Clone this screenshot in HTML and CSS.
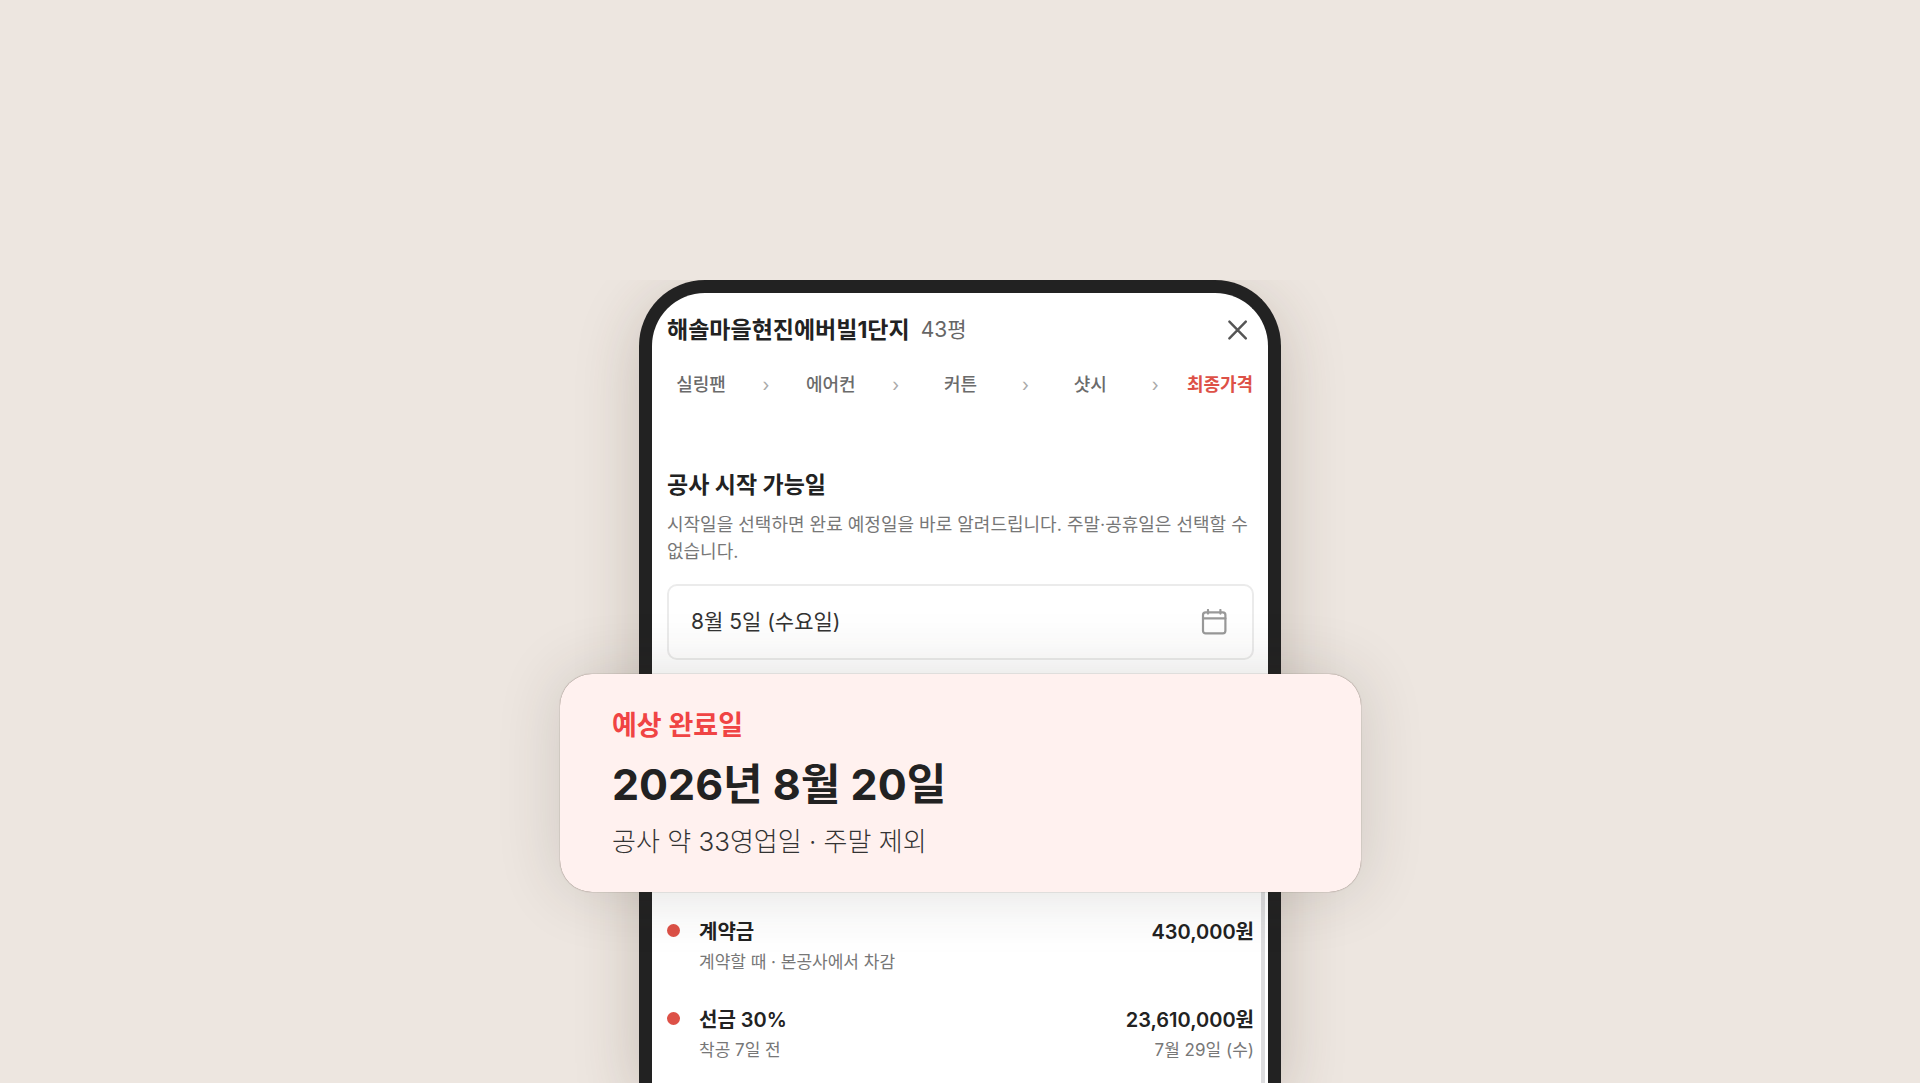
FILE: index.html
```
<!DOCTYPE html>
<html lang="ko">
<head>
<meta charset="utf-8">
<meta name="viewport" content="width=device-width, initial-scale=1">
<title>최종가격</title>
<link rel="stylesheet" href="styles.css">
</head>
<body>
<main class="stage">
  <section class="phone">
    <header class="header">
      <h1 class="complex">해솔마을현진에버빌1단지</h1>
      <span class="area">43평</span>
      <button class="close" type="button" aria-label="닫기">
        <svg width="20" height="20" viewBox="0 0 20 20" fill="none" stroke="currentColor" stroke-width="2.4" stroke-linecap="round"><path d="M1.4 1.6 17.8 18.4M17.8 1.6 1.4 18.4"/></svg>
      </button>
    </header>

    <nav class="steps" aria-label="견적 단계">
      <a class="step" href="#">실링팬</a>
      <span class="sep">›</span>
      <a class="step" href="#">에어컨</a>
      <span class="sep">›</span>
      <a class="step" href="#">커튼</a>
      <span class="sep">›</span>
      <a class="step" href="#">샷시</a>
      <span class="sep">›</span>
      <a class="step step-current" href="#" aria-current="step">최종가격</a>
    </nav>

    <label class="heading" for="start-date">공사 시작 가능일</label>
    <p class="description">시작일을 선택하면 완료 예정일을 바로 알려드립니다. 주말·공휴일은 선택할 수 없습니다.</p>
    <div class="field">
      <input class="field-input" id="start-date" type="text" value="8월 5일 (수요일)" readonly>
      <svg class="field-icon" width="26" height="26" viewBox="0 0 26 26" fill="none" stroke="currentColor" stroke-width="2.2" stroke-linecap="round"><rect x="2" y="3.4" width="22.4" height="21" rx="2.6"/><path d="M2 9.4h22.4M7 1v3.6M19.4 1v3.6"/></svg>
    </div>

    <article class="result">
      <h2 class="result-label">예상 완료일</h2>
      <p class="result-date">2026년 8월 20일</p>
      <p class="result-note">공사 약 33영업일 · 주말 제외</p>
    </article>

    <ul class="payments">
      <li class="payment">
        <span class="dot"></span>
        <div class="payment-main">
          <strong class="payment-title">계약금</strong>
          <span class="payment-sub">계약할 때 · 본공사에서 차감</span>
        </div>
        <div class="payment-side">
          <strong class="payment-title">430,000원</strong>
        </div>
      </li>
      <li class="payment">
        <span class="dot"></span>
        <div class="payment-main">
          <strong class="payment-title">선금 30%</strong>
          <span class="payment-sub">착공 7일 전</span>
        </div>
        <div class="payment-side">
          <strong class="payment-title">23,610,000원</strong>
          <span class="payment-sub">7월 29일 (수)</span>
        </div>
      </li>
    </ul>
  </section>
</main>
</body>
</html>
```

FILE: styles.css
```
* {
  box-sizing: border-box;
}

body {
  margin: 0;
  background: #ede6e0;
  color: #222;
  font-family: Inter, "Noto Sans CJK KR", sans-serif;
}

h1,
h2,
p,
ul {
  margin: 0;
  padding: 0;
}

.stage {
  display: flex;
  justify-content: center;
  height: 100vh;
  padding-top: 280px;
  overflow: hidden;
}

.phone {
  display: flex;
  flex-direction: column;
  width: 642px;
  max-width: 100%;
  padding: 21px 14px 0 15px;
  border: 13px solid #222;
  border-bottom: 0;
  border-radius: 66px 66px 0 0;
  background: #fff;
  box-shadow: 0 16px 64px rgba(70, 50, 30, 0.22);
  clip-path: inset(0 -240px);
}

.header {
  display: flex;
  align-items: center;
  gap: 11px;
  line-height: 32px;
}

.complex {
  font-size: 23px;
  font-weight: 700;
}

.area {
  color: #666;
  font-size: 21px;
}

.close {
  display: flex;
  margin-left: auto;
  padding: 6px;
  border: 0;
  background: none;
  color: #555;
}

.steps {
  display: grid;
  grid-template-columns: 68px 1fr 68px 1fr 68px 1fr 68px 1fr 68px;
  margin-top: 25px;
  font-size: 18px;
  line-height: 28px;
  text-align: center;
  white-space: nowrap;
}

.step {
  color: #6b6b6b;
  font-weight: 500;
  text-decoration: none;
}

.step-current {
  color: #dd5147;
  font-weight: 700;
}

.sep {
  color: #aaa;
}

.heading {
  margin-top: 70px;
  font-size: 23px;
  font-weight: 700;
  line-height: 32px;
}

.description {
  margin-top: 10px;
  color: #777;
  font-size: 18px;
  line-height: 27px;
}

.field {
  display: flex;
  align-items: center;
  flex-shrink: 0;
  height: 76px;
  margin-top: 19px;
  padding: 0 25px 0 22px;
  border: 2px solid #ebebeb;
  border-radius: 10px;
}

.field-input {
  flex: 1;
  min-width: 0;
  padding: 0;
  border: 0;
  outline: 0;
  background: none;
  color: #333;
  font: 400 21px/32px Inter, "Noto Sans CJK KR", sans-serif;
}

.field-icon {
  color: #999;
}

.result {
  position: relative;
  z-index: 1;
  display: flex;
  flex-direction: column;
  flex-shrink: 0;
  gap: 12px;
  margin: 14px -107px 0 -107px;
  padding: 34px 52px 32px;
  border-radius: 32px;
  background: #fff1ef;
  box-shadow: 0 0 1px rgba(60, 45, 30, 0.8), 0 0 64px rgba(50, 45, 35, 0.16);
}

.result-label {
  color: #f04444;
  font-size: 27px;
  font-weight: 600;
  line-height: 36px;
}

.result-date {
  font-size: 43px;
  font-weight: 700;
  line-height: 56px;
}

.result-note {
  color: #333;
  font-size: 26px;
  font-weight: 300;
  line-height: 36px;
}

.payments {
  display: flex;
  flex: 1;
  flex-direction: column;
  gap: 32px;
  margin-right: -11px;
  padding: 26px 7px 0 0;
  border-right: 4px solid #dcdcde;
  list-style: none;
}

.payment {
  display: flex;
}

.dot {
  width: 13px;
  height: 13px;
  margin: 6px 19px 0 0;
  border-radius: 50%;
  background: #dd5147;
}

.payment-main,
.payment-side {
  display: flex;
  flex-direction: column;
  gap: 4px;
}

.payment-side {
  margin-left: auto;
  text-align: right;
}

.payment-title {
  font-size: 20px;
  font-weight: 600;
  line-height: 28px;
}

.payment-sub {
  color: #777;
  font-size: 17px;
  line-height: 24px;
}
```
